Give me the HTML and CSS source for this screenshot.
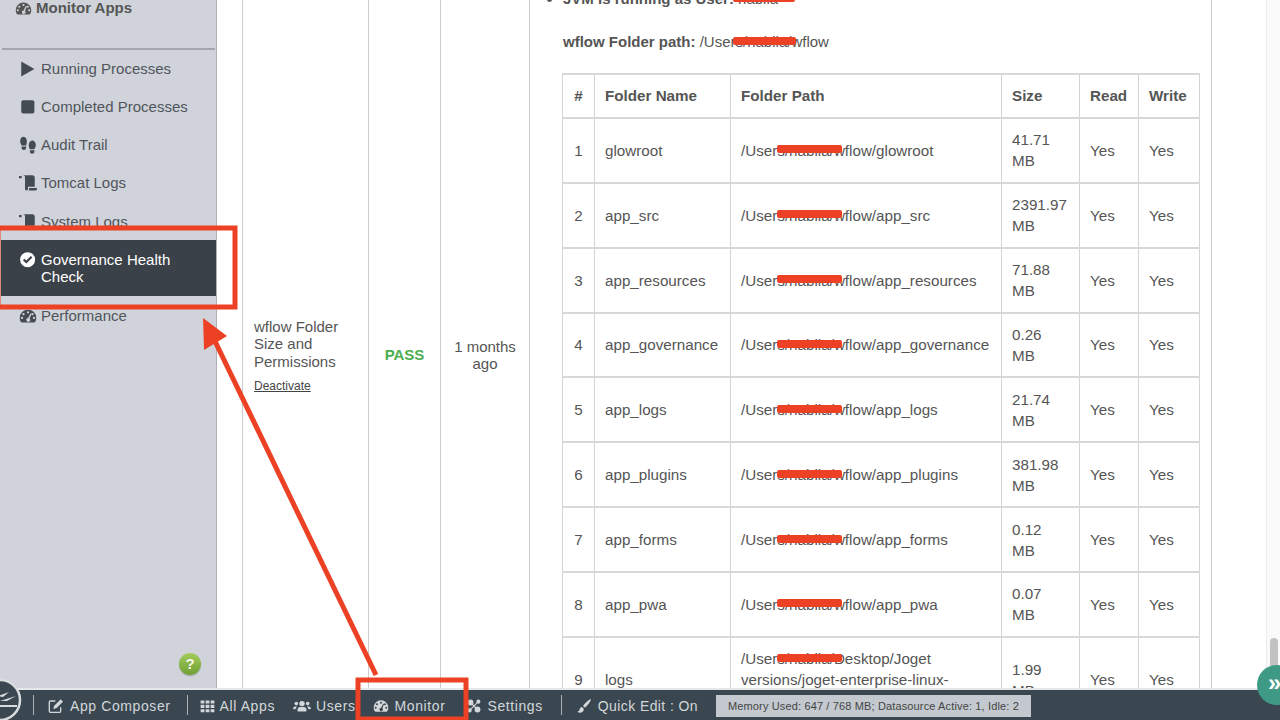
FILE: index.html
```html
<!DOCTYPE html>
<html lang="en">
<head>
    <meta charset="UTF-8">
    <title>Governance Health Check</title>
    <link rel="stylesheet" href="styles.css">
</head>
<body>
<svg class="icon-defs" width="0" height="0">
    <defs>
        <symbol id="i-gauge" viewBox="0 0 24 24">
            <path fill-rule="evenodd" d="M12 3.500A11 11 0 0 0 1 14.500c0 2.200.6 4 1.600 5.400.3.4.7.6 1.200.6h16.400c.5 0 .9-.2 1.200-.6 1-1.400 1.600-3.200 1.600-5.400A11 11 0 0 0 12 3.500zM12 5.500a1.500 1.500 0 1 1 0 3 1.500 1.500 0 0 1 0-3zM6 8a1.500 1.500 0 1 1 0 3 1.500 1.500 0 0 1 0-3zM18 8a1.500 1.500 0 1 1 0 3 1.500 1.500 0 0 1 0-3zM4 13a1.500 1.500 0 1 1 0 3 1.500 1.500 0 0 1 0-3zM20 13a1.500 1.500 0 1 1 0 3 1.500 1.500 0 0 1 0-3zM15.200 8.500l1.400.5-2.500 6.500a2.500 2.500 0 1 1-1.900-.7z"/>
        </symbol>
        <symbol id="i-scroll" viewBox="0 0 24 24">
            <path d="M0 2.500h3.500v3H0zM5 1.500h13c1.700 0 3 1.300 3 3v12.500h-9v3c0 1-.8 2-2 2s-2-1-2-2V4c0-1.200-1-2.500-3-2.500zM13.500 18.500H24v1c0 1.600-1.300 2.500-2.500 2.500H12.500c.7-.6 1-1.500 1-2.500z"/>
        </symbol>
    </defs>
</svg>

<div class="workspace">
    <aside class="sidebar">
        <h2 class="sidebar-title">
            <svg class="title-icon"><use href="#i-gauge"/></svg>
            Monitor Apps
        </h2>
        <hr class="sidebar-rule">
        <ul class="side-menu">
            <li class="side-item">
                <svg class="side-icon" viewBox="0 0 24 24"><path d="M3 2v20l17.500-10z"/></svg>
                Running Processes
            </li>
            <li class="side-item">
                <svg class="side-icon" viewBox="0 0 24 24"><rect x="3" y="3" width="17.500" height="17.500" rx="2.500"/></svg>
                Completed Processes
            </li>
            <li class="side-item">
                <svg class="side-icon" viewBox="0 0 24 24"><path d="M6 1c3 0 4.500 3 4.500 6.500 0 2-.6 3.500-.9 5H3.300C3 11 1.500 9.500 1.500 7 1.500 3.500 3.500 1 6 1zM3.500 14h6v1.500c0 1.800-1.300 3-3 3s-3-1.200-3-3zM17.500 6c2.500 0 5 2.500 5 6 0 2.500-1.500 4-1.800 5.500h-6.300c-.3-1.500-1.400-3-1.400-5C13 9 15 6 17.500 6zM14.500 19h6v1.500c0 1.800-1.300 3-3 3s-3-1.200-3-3z"/></svg>
                Audit Trail
            </li>
            <li class="side-item">
                <svg class="side-icon"><use href="#i-scroll"/></svg>
                Tomcat Logs
            </li>
            <li class="side-item">
                <svg class="side-icon"><use href="#i-scroll"/></svg>
                System Logs
            </li>
            <li class="side-item side-item-active">
                <svg class="side-icon" viewBox="0 0 24 24"><path fill-rule="evenodd" d="M11.500 1.500a10 10 0 1 0 0 20 10 10 0 0 0 0-20zM9.800 16.800l-4.600-4.600 2-2 2.600 2.600 6-6 2 2z"/></svg>
                Governance Health Check
            </li>
            <li class="side-item">
                <svg class="side-icon"><use href="#i-gauge"/></svg>
                Performance
            </li>
        </ul>
        <span class="help-btn">?</span>
    </aside>

    <main class="content">
        <div class="check-row">
            <div class="cell cell-name">
                <div>wflow Folder Size and Permissions</div>
                <a class="deactivate">Deactivate</a>
            </div>
            <div class="cell cell-result">PASS</div>
            <div class="cell cell-date">1 months ago</div>
            <div class="cell-detail">
                <ul class="detail-list">
                    <li><b>JVM is running as User:</b> <span class="redact redact-name">nabila</span></li>
                </ul>
                <p class="folder-line"><b>wflow Folder path:</b> /User<span class="redact redact-line">s/nabila/</span>wflow</p>
                <table class="folder-table">
                    <colgroup>
                        <col class="col-num"><col class="col-name"><col class="col-path"><col class="col-size"><col class="col-read"><col class="col-write">
                    </colgroup>
                    <thead>
                    <tr><th class="num">#</th><th>Folder Name</th><th>Folder Path</th><th>Size</th><th>Read</th><th>Write</th></tr>
                    </thead>
                    <tbody>
                    <tr><td class="num">1</td><td>glowroot</td><td>/User<span class="redact">s/nabila/</span>wflow/glowroot</td><td>41.71<br>MB</td><td>Yes</td><td>Yes</td></tr>
                    <tr><td class="num">2</td><td>app_src</td><td>/User<span class="redact">s/nabila/</span>wflow/app_src</td><td>2391.97<br>MB</td><td>Yes</td><td>Yes</td></tr>
                    <tr><td class="num">3</td><td>app_resources</td><td>/User<span class="redact">s/nabila/</span>wflow/app_resources</td><td>71.88<br>MB</td><td>Yes</td><td>Yes</td></tr>
                    <tr><td class="num">4</td><td>app_governance</td><td>/User<span class="redact">s/nabila/</span>wflow/app_governance</td><td>0.26<br>MB</td><td>Yes</td><td>Yes</td></tr>
                    <tr><td class="num">5</td><td>app_logs</td><td>/User<span class="redact">s/nabila/</span>wflow/app_logs</td><td>21.74<br>MB</td><td>Yes</td><td>Yes</td></tr>
                    <tr><td class="num">6</td><td>app_plugins</td><td>/User<span class="redact">s/nabila/</span>wflow/app_plugins</td><td>381.98<br>MB</td><td>Yes</td><td>Yes</td></tr>
                    <tr><td class="num">7</td><td>app_forms</td><td>/User<span class="redact">s/nabila/</span>wflow/app_forms</td><td>0.12<br>MB</td><td>Yes</td><td>Yes</td></tr>
                    <tr><td class="num">8</td><td>app_pwa</td><td>/User<span class="redact">s/nabila/</span>wflow/app_pwa</td><td>0.07<br>MB</td><td>Yes</td><td>Yes</td></tr>
                    <tr><td class="num">9</td><td>logs</td><td>/User<span class="redact">s/nabila/</span>Desktop/Joget versions/joget-enterprise-linux-7.0.x/wflow/logs</td><td>1.99<br>MB</td><td>Yes</td><td>Yes</td></tr>
                    </tbody>
                </table>
            </div>
        </div>
        <div class="scroll-gutter"><span class="scroll-thumb"></span></div>
    </main>
</div>

<footer class="adminbar">
    <span class="bar-sep"></span>
    <span class="bar-item">
        <svg class="bar-icon" viewBox="0 0 24 24"><path class="bar-outline" d="M19 14v6a1.500 1.500 0 0 1-1.500 1.500h-14A1.500 1.500 0 0 1 2 20V6a1.500 1.500 0 0 1 1.500-1.500H11"/><path d="M9 12L19 2l3.500 3.500-10 10L8 16.500z"/></svg>
        App Composer
    </span>
    <span class="bar-sep"></span>
    <span class="bar-item bar-item-apps">
        <svg class="bar-icon" viewBox="0 0 24 24"><path d="M1 3h6v5H1zM9 3h6v5H9zM17 3h6v5h-6zM1 10h6v5H1zM9 10h6v5H9zM17 10h6v5h-6zM1 17h6v5H1zM9 17h6v5H9zM17 17h6v5h-6z"/></svg>
        All Apps
    </span>
    <span class="bar-item bar-item-users">
        <svg class="bar-icon" viewBox="0 0 30 24"><circle cx="15" cy="8" r="4.500"/><circle cx="5.500" cy="8" r="3"/><circle cx="24.500" cy="8" r="3"/><path d="M7.500 20v-2c0-3 2.500-4.500 4-4.500h7c1.500 0 4 1.500 4 4.500v2c0 .8-.7 1-1 1H8.500c-.3 0-1-.2-1-1zM0 17c0-2.500 1.500-4 3.500-4H7c-1.500 1-2.500 2.500-2.500 4.500zM30 17c0-2.500-1.500-4-3.500-4H23c1.500 1 2.500 2.500 2.500 4.500z"/></svg>
        Users
    </span>
    <span class="bar-item bar-item-monitor">
        <svg class="bar-icon"><use href="#i-gauge"/></svg>
        Monitor
    </span>
    <span class="bar-item bar-item-settings">
        <svg class="bar-icon" viewBox="0 0 24 24"><path class="bar-link" d="M6 6l12 12M19 5L5 19"/><circle cx="6" cy="6" r="5"/><circle cx="19.500" cy="4.500" r="3.500"/><circle cx="4.500" cy="19.500" r="3.500"/><circle cx="18" cy="18" r="5"/></svg>
        Settings
    </span>
    <span class="bar-sep"></span>
    <span class="bar-item bar-item-edit">
        <svg class="bar-icon" viewBox="0 0 24 24"><path d="M22.500 1.500c-4 1.500-9 6-12 10.500l3 2.500c4-3.500 8.500-9 9-13zM9 13.500c-3 .5-3.500 3-4 5-.2 1-1.500 1.800-3 2 2.500 2 8 2.500 9.500-2 .4-1.500 0-2.500-.5-3.200z"/></svg>
        Quick Edit : On
    </span>
    <span class="memory-box">Memory Used: 647 / 768 MB; Datasource Active: 1, Idle: 2</span>
</footer>

<svg class="bar-logo" viewBox="0 0 44 44">
    <circle cx="22" cy="22" r="20" fill="#3a4750" stroke="#d8dcdf" stroke-width="2.500"/>
    <path d="M22 23l16-5-9 5zM20 18l11-4-6 5zM3 27h36v2H3z" fill="#d8dcdf"/>
</svg>
<span class="teal-toggle">&raquo;</span>

<svg class="markup" viewBox="0 0 1280 720">
    <rect class="markup-box" x="-2" y="228" width="237" height="79"/>
    <rect class="markup-box" x="358" y="680" width="108" height="39"/>
    <line class="markup-line" x1="376" y1="675" x2="212" y2="335"/>
    <polygon class="markup-head" points="203,318 227,336 204,350"/>
</svg>
</body>
</html>
```

FILE: styles.css
```css
* {
    box-sizing: border-box;
    margin: 0;
    padding: 0;
}

html, body {
    height: 100%;
    overflow: hidden;
}

body {
    background-color: #fff;
    font-family: "Liberation Sans", Arial, sans-serif;
    font-size: 15px;
    color: #555;
    position: relative;
}

.icon-defs {
    position: absolute;
}

.workspace {
    display: flex;
    height: 688px;
    overflow: hidden;
}

/* sidebar */
.sidebar {
    position: relative;
    flex: 0 0 217px;
    background-color: #d0d4da;
    border-right: 1px solid #aeb1b5;
}

.sidebar-title {
    display: flex;
    align-items: center;
    gap: 4px;
    height: 16px;
    padding-left: 15px;
    font-size: 15px;
    line-height: 16px;
    color: #555;
}

.title-icon {
    width: 17px;
    height: 17px;
    fill: #555;
}

.sidebar-rule {
    height: 2px;
    margin: 32px 1px 0 2px;
    border: 0;
    background-color: #a3a6aa;
}

.side-menu {
    list-style: none;
    margin-top: -1px;
}

.side-item {
    display: flex;
    align-items: flex-start;
    gap: 4px;
    padding: 10.500px 10px 10.500px 19px;
    line-height: 17.300px;
    color: #50555c;
}

.side-item-active {
    margin-left: 1px;
    padding-left: 18px;
    background-color: #3b4148;
    color: #fff;
}

.side-icon {
    flex: 0 0 18px;
    width: 18px;
    height: 18px;
    margin-bottom: -1px;
    fill: #454b53;
}

.side-item-active .side-icon {
    fill: #fff;
}

.help-btn {
    position: absolute;
    left: 179px;
    top: 653px;
    width: 22px;
    height: 22px;
    border-radius: 50%;
    background: linear-gradient(#a4cc5c, #6f9f33);
    box-shadow: 0 1px 1px rgba(0, 0, 0, .25);
    color: #f4f8ea;
    font-weight: bold;
    font-size: 15px;
    line-height: 22px;
    text-align: center;
}

/* main check row, scrolled part way down */
.content {
    flex: 1;
    display: flex;
    min-width: 0;
    padding-left: 25px;
}

.check-row {
    display: grid;
    grid-template-columns: 126px 72px 89px 682px;
    align-items: center;
    height: 750px;
    margin-top: -20px;
    border-left: 1px solid #ccc;
}

.cell {
    display: flex;
    flex-direction: column;
    justify-content: center;
    align-self: stretch;
    border-right: 1px solid #ccc;
    line-height: 17.300px;
}

.cell-name {
    padding: 2px 10px 0 11px;
}

.deactivate {
    margin-top: 9px;
    font-size: 12px;
    line-height: 15px;
    color: #444;
    text-decoration: underline;
}

.cell-result {
    font-weight: bold;
    color: #4cae50;
    text-align: center;
}

.cell-date {
    padding: 0 12px;
    text-align: center;
}

.cell-detail {
    align-self: stretch;
    padding: 10px 11px 0 33px;
    border-right: 1px solid #ccc;
}

.detail-list {
    line-height: 17px;
}

.folder-line {
    margin-top: 26px;
    line-height: 17px;
}

.redact {
    position: relative;
}

.redact::after {
    content: "";
    position: absolute;
    left: 0;
    right: -8px;
    top: 3.500px;
    height: 8px;
    border-radius: 2px;
    background-color: #ec4124;
}

.redact-line::after {
    left: -3px;
    right: -5px;
}

.redact-name::after {
    left: -5px;
    right: -17px;
}

.folder-table {
    table-layout: fixed;
    width: 637px;
    margin: 23px 0 0 -1px;
    border-collapse: collapse;
    font-size: 15.200px;
}

.col-num { width: 32px; }
.col-name { width: 136px; }
.col-path { width: 271px; }
.col-size { width: 78px; }
.col-read { width: 59px; }
.col-write { width: 61px; }

.folder-table th,
.folder-table td {
    padding: 10.450px 10px;
    border: 1px solid #d4d4d4;
    border-top-width: 2px;
    border-top-color: #d8d8d8;
    line-height: 21px;
    text-align: left;
    vertical-align: middle;
}

.folder-table th.num,
.folder-table td.num {
    padding: 0;
    text-align: center;
}

/* page scrollbar */
.scroll-gutter {
    position: absolute;
    left: 1266px;
    top: 0;
    width: 14px;
    height: 688px;
    border-left: 1px solid #ececec;
    background-color: #fafafa;
}

.scroll-thumb {
    position: absolute;
    left: 3px;
    top: 638px;
    width: 8px;
    height: 34px;
    border-radius: 4px;
    background-color: #c2c2c2;
}

/* bottom admin bar */
.adminbar {
    display: flex;
    align-items: center;
    gap: 18px;
    height: 32px;
    padding-left: 35px;
    border-top: 2px solid #e6e7e8;
    background-color: #3a4750;
    color: #d3d7da;
    font-size: 14px;
    letter-spacing: .6px;
}

.bar-sep {
    flex: 0 0 1px;
    height: 20px;
    margin: 0 -4px 0 -2px;
    background-color: #a9b0b5;
}

.bar-item {
    display: flex;
    align-items: center;
    gap: 6px;
    margin-top: 1px;
    white-space: nowrap;
}

.bar-icon {
    width: 16px;
    height: 16px;
    fill: currentColor;
}

.bar-item-apps {
    gap: 5px;
    margin-left: -2px;
}

.bar-item-apps .bar-icon {
    width: 15px;
}

.bar-item-users {
    gap: 5px;
}

.bar-item-users .bar-icon {
    width: 18px;
}

.bar-item-monitor {
    margin-left: -1px;
}

.bar-item-settings {
    margin-left: 4px;
    padding-right: 2px;
}

.bar-item-settings .bar-icon {
    width: 14px;
}

.bar-item-edit {
    letter-spacing: .4px;
}

.bar-outline {
    fill: none;
    stroke: currentColor;
    stroke-width: 2;
}

.bar-link {
    fill: none;
    stroke: currentColor;
    stroke-width: 2;
}

.memory-box {
    width: 315px;
    height: 22px;
    margin-top: 1px;
    padding-left: 12px;
    background-color: #c3c9cf;
    color: #444;
    font-size: 11px;
    letter-spacing: .14px;
    line-height: 22px;
    white-space: nowrap;
}

.bar-logo {
    position: absolute;
    left: -22px;
    top: 678px;
    width: 44px;
    height: 44px;
}

.teal-toggle {
    position: absolute;
    left: 1257px;
    top: 665px;
    width: 40px;
    height: 40px;
    padding-left: 11px;
    border-radius: 50%;
    background-color: #3f9a85;
    color: #fff;
    font-size: 24px;
    font-weight: bold;
    line-height: 36px;
}

/* red annotations on top of the capture */
.markup {
    position: absolute;
    left: 0;
    top: 0;
    width: 1280px;
    height: 720px;
    pointer-events: none;
}

.markup-box {
    fill: none;
    stroke: #ec4124;
    stroke-width: 5;
}

.markup-line {
    stroke: #ec4124;
    stroke-width: 5;
}

.markup-head {
    fill: #ec4124;
}
```
